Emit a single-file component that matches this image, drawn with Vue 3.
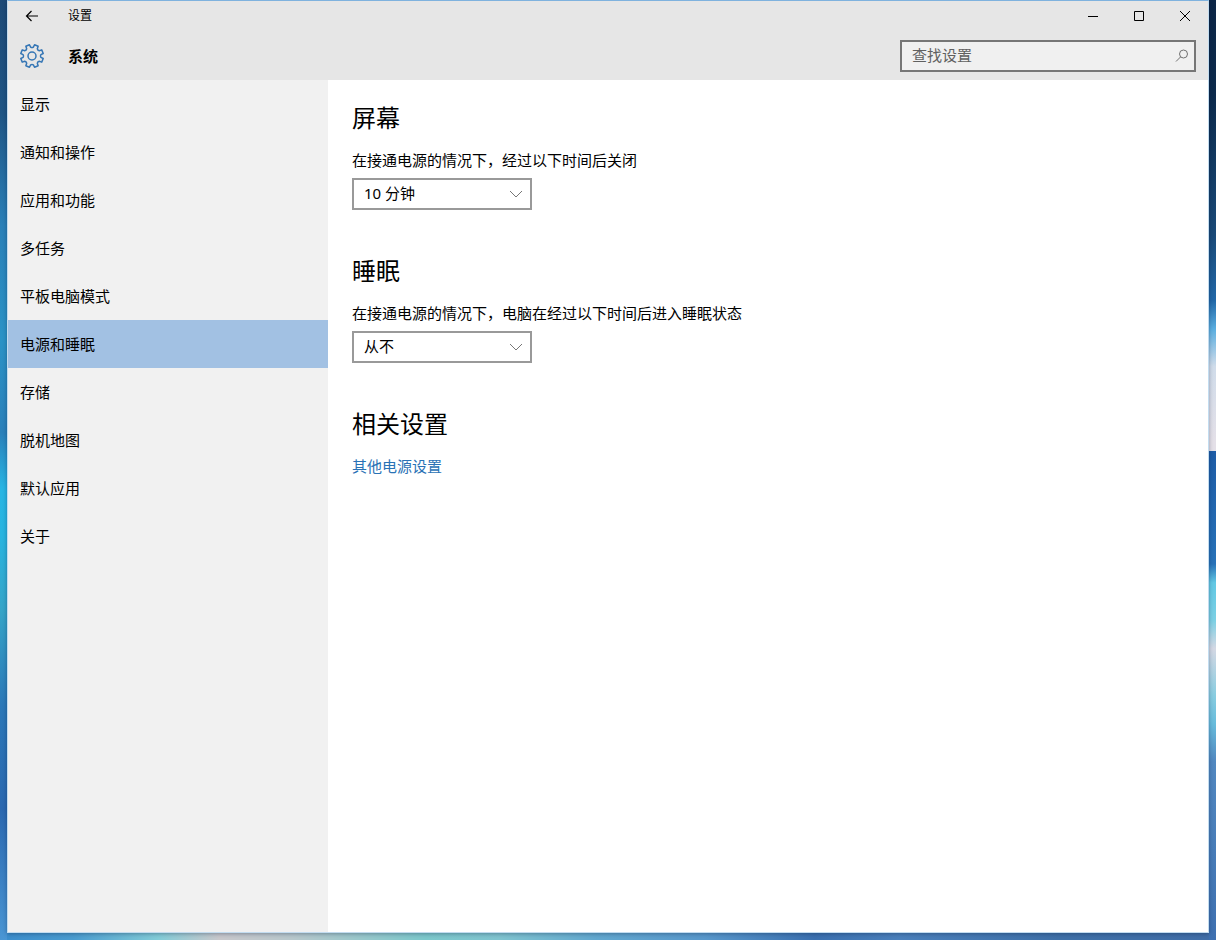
<script setup>
import { ref } from 'vue'

const items = ['显示', '通知和操作', '应用和功能', '多任务', '平板电脑模式', '电源和睡眠', '存储', '脱机地图', '默认应用', '关于']
const active = ref('电源和睡眠')
const query = ref('')
const screenOff = ref('10 分钟')
const sleepAfter = ref('从不')

// Outline of an eight-toothed gear centred on 0,0, with a valley at the top
function gearPath(teeth, outer, inner) {
  const step = (Math.PI * 2) / teeth
  const at = (a, r) => `${(Math.sin(a) * r).toFixed(2)} ${(-Math.cos(a) * r).toFixed(2)}`
  let d = ''
  for (let i = 0; i < teeth; i++) {
    const c = (i + 0.5) * step
    d += `${i ? 'L' : 'M'}${at(c - 0.17, outer)}L${at(c + 0.17, outer)}`
    d += `L${at(c + 0.24, inner)}Q${at(c + step / 2, inner - 1)} ${at(c + step - 0.24, inner)}`
  }
  return d + 'Z'
}
const gear = gearPath(8, 11.5, 9)
</script>

<template>
  <div class="desktop">
    <div class="window">
      <header class="top">
        <div class="titlebar">
          <button class="back" aria-label="返回">
            <svg width="14" height="12" viewBox="0 0 14 12"><path d="M13 6H1.5M6.5 1L1.5 6l5 5" /></svg>
          </button>
          <span class="caption">设置</span>
          <button class="ctl" aria-label="最小化">
            <svg width="12" height="12" viewBox="0 0 12 12"><path d="M1 6.5h10" /></svg>
          </button>
          <button class="ctl" aria-label="最大化">
            <svg width="12" height="12" viewBox="0 0 12 12"><path d="M1.5 1.5h9v9h-9z" /></svg>
          </button>
          <button class="ctl" aria-label="关闭">
            <svg width="12" height="12" viewBox="0 0 12 12"><path d="M1 1l10 10M11 1L1 11" /></svg>
          </button>
        </div>
        <div class="heading">
          <svg class="gear" width="26" height="26" viewBox="-13 -13 26 26">
            <path :d="gear" />
            <circle r="4" />
          </svg>
          <h1>系统</h1>
          <label class="search">
            <input v-model="query" type="text" placeholder="查找设置" aria-label="查找设置" />
            <svg width="14" height="14" viewBox="0 0 14 14"><circle cx="8.5" cy="5" r="4" /><path d="M5.6 7.9L1 12.5" /></svg>
          </label>
        </div>
      </header>
      <div class="body">
        <nav class="side">
          <button v-for="item in items" :key="item" :class="{ on: item === active }" @click="active = item">{{ item }}</button>
        </nav>
        <main>
          <section>
            <h2>屏幕</h2>
            <label for="screen">在接通电源的情况下，经过以下时间后关闭</label>
            <div class="pick">
              <select id="screen" v-model="screenOff"><option>10 分钟</option><option>从不</option></select>
              <svg width="14" height="8" viewBox="0 0 14 8"><path d="M1 1l6 6 6-6" /></svg>
            </div>
          </section>
          <section>
            <h2>睡眠</h2>
            <label for="sleep">在接通电源的情况下，电脑在经过以下时间后进入睡眠状态</label>
            <div class="pick">
              <select id="sleep" v-model="sleepAfter"><option>10 分钟</option><option>从不</option></select>
              <svg width="14" height="8" viewBox="0 0 14 8"><path d="M1 1l6 6 6-6" /></svg>
            </div>
          </section>
          <section>
            <h2>相关设置</h2>
            <a href="#">其他电源设置</a>
          </section>
        </main>
      </div>
    </div>
  </div>
</template>

<style>
body { margin: 0; }
</style>

<style scoped>
* { box-sizing: border-box; }
.desktop {
  display: flex;
  min-height: 100vh;
  padding: 0 7px 7px;
  font: 15px/24px "Noto Sans", "Noto Sans CJK SC", sans-serif;
  color: #000;
  background:
    linear-gradient(#1d4a77 0, #1f5585 12%, #2a80b8 24%, #2b93c6 36%, #2a80ba 46%, #27b5e4 52%, #28b4e0 57%, #35a4c8 65%, #2b78b8 75%, #2a68b0 86%, #4a96d4 100%) left / 7px 100% no-repeat,
    linear-gradient(#0c2646 0, #0c2a4c 10%, #1a4a78 25%, #2268a8 32%, #5aaee0 35%, #d0dcea 39%, #e4e0e8 47%, #e4e0e8 48%, #1e5ca6 48%, #2872b8 60%, #62c8e4 62%, #7cd0e4 66%, #d4d8e4 69%, #88cce0 74%, #68bcdc 77%, #5288c0 81%, #3e70b0 100%) right / 7px 100% no-repeat,
    linear-gradient(90deg, #3a8ccc 0, #4a9cd0 6%, #82ccd8 13%, #c8c8cc 18%, #b8c8cc 24%, #7cc8cc 35%, #80c4d0 41%, #62a8d0 49%, #5898cc 58%, #3a70b0 67%, #4a80bc 74%, #3e70a8 87%, #406ea8 100%) bottom / 100% 7px no-repeat;
}
.window {
  flex: 1;
  display: flex;
  flex-direction: column;
  border: 1px solid #c2dcf0;
  border-top-color: #7fb2de;
  box-shadow: 0 1px 4px rgba(0, 20, 50, .35);
  background: #fff;
}
button { border: 0; padding: 0; background: none; font: inherit; color: inherit; }
svg { display: block; fill: none; stroke: #000; }
.top { background: #e6e6e6; }
.titlebar { display: flex; align-items: center; height: 30px; }
.back { display: flex; align-items: center; justify-content: center; width: 48px; height: 30px; }
.back svg { stroke-width: 1.2; }
.caption { flex: 1; padding-left: 12px; font-size: 12px; }
.ctl { display: flex; align-items: center; justify-content: center; width: 46px; height: 30px; }
.heading { display: flex; align-items: center; height: 49px; padding: 1px 12px 0 11px; }
.gear { stroke: #3576b5; stroke-width: 1.5; stroke-linejoin: round; }
h1 { flex: 1; margin: 0 0 0 23px; font-size: 15px; line-height: 24px; font-weight: 700; }
.search {
  display: flex;
  align-items: center;
  width: 296px;
  height: 32px;
  padding: 0 5px 0 10px;
  border: 2px solid #767676;
  background: #f0f0f0;
}
.search input { flex: 1; min-width: 0; height: 28px; padding: 0 0 2px; border: 0; outline: 0; background: none; font: inherit; }
.search input::placeholder { color: #606060; opacity: 1; }
.search svg { stroke: #707070; }
.body { flex: 1; display: flex; }
.side { display: flex; flex-direction: column; width: 320px; background: #f1f1f1; }
.side button { height: 48px; padding: 0 12px; text-align: left; }
.side .on { background: #a2c1e3; }
main { flex: 1; padding: 20px 24px; }
section { margin-bottom: 43px; }
h2 { margin: 0 0 12px; font-size: 24px; line-height: 36px; font-weight: 400; }
label, a { display: block; }
.pick { display: flex; align-items: center; position: relative; width: 180px; margin-top: 6px; }
select {
  width: 100%;
  height: 32px;
  padding: 0 10px 2px;
  border: 2px solid #999;
  border-radius: 0;
  background: #fff;
  font: inherit;
  color: #000;
  appearance: none;
}
.pick svg { position: absolute; right: 9px; stroke: #777; pointer-events: none; }
a { color: #2a72b5; text-decoration: none; }
</style>
